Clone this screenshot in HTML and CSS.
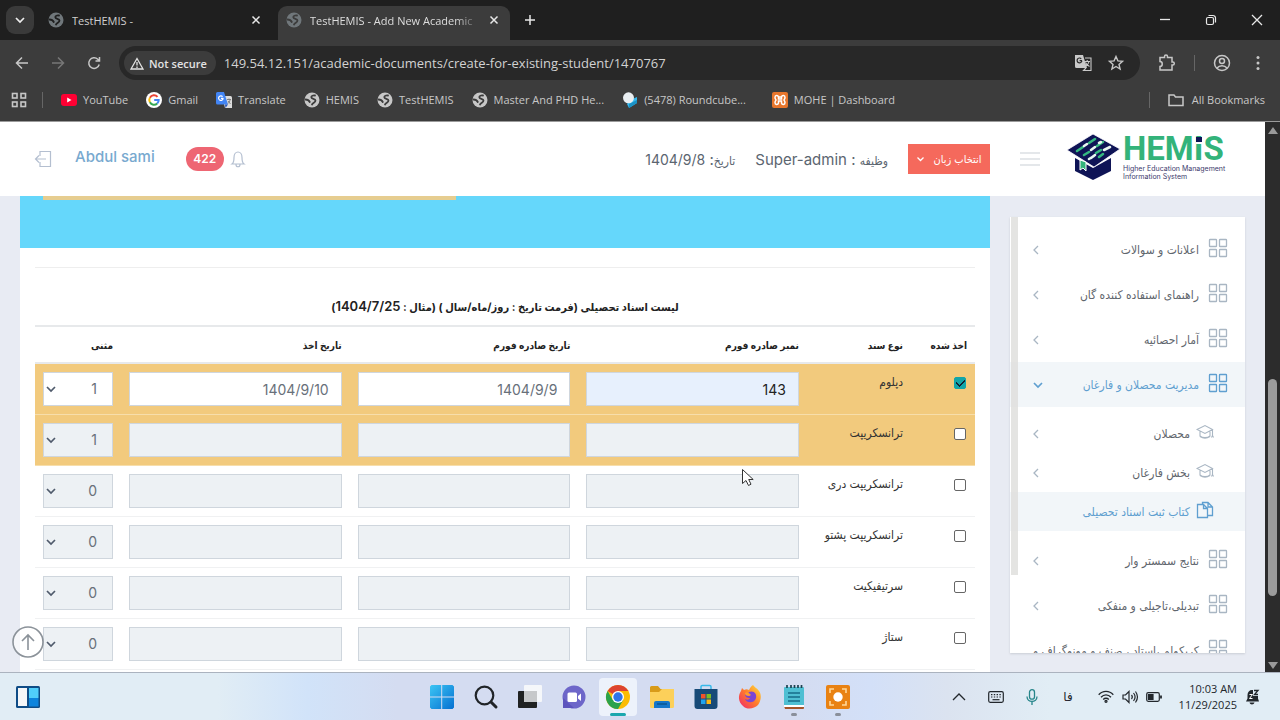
FILE: index.html
```html
<!DOCTYPE html>
<html lang="fa">
<head>
<meta charset="utf-8">
<title>TestHEMIS - Add New Academic Document</title>
<link rel="stylesheet" href="styles.css">
</head>
<body>
<svg class="defs" aria-hidden="true">
  <symbol id="globe" viewBox="0 0 16 16"><circle cx="8" cy="8" r="7.500" fill="currentColor"/><path d="M11 3.500c-2-.3-3.800.3-3.700 1.800.1 2 4.200 1 4.200 3.300 0 2-2.500 2-3.500 3.900M1.500 7.500c2.300 0 3.500.8 4.300 2.500" fill="none" stroke="var(--cut)" stroke-width="1.800" stroke-linecap="round"/></symbol>
  <symbol id="close" viewBox="0 0 10 10"><path d="M1.500 1.500l7 7M8.500 1.500l-7 7" stroke="currentColor" stroke-width="1.500" fill="none"/></symbol>
  <symbol id="grid" viewBox="0 0 20 20"><g fill="none" stroke="currentColor" stroke-width="1.300"><rect x="1.500" y="1.500" width="7" height="7" rx=".6"/><rect x="11.500" y="1.500" width="7" height="7" rx=".6"/><rect x="1.500" y="11.500" width="7" height="7" rx=".6"/><rect x="11.500" y="11.500" width="7" height="7" rx=".6"/></g></symbol>
  <symbol id="cap" viewBox="0 0 18 16"><path d="M1 5.500L9 1.500l7.500 4L9 9.500zM4 7.500v4.500c2.500 2.200 7.500 2.200 10 0V7.500M4 12.500c3 2 7 2 10 0M16.500 5.500v7M15.500 13.500l1-2 1 2" fill="none" stroke="currentColor" stroke-width="1.100"/></symbol>
  <symbol id="down" viewBox="0 0 12 8"><path d="M2 2l4 4 4-4" fill="none" stroke="currentColor" stroke-width="1.700"/></symbol>
  <symbol id="left" viewBox="0 0 8 12"><path d="M6 2L2 6l4 4" fill="none" stroke="currentColor" stroke-width="1.300"/></symbol>
</svg>

<header class="browser">
  <div class="tabs">
    <button class="tab-search" aria-label="Search tabs"><svg width="12" height="8"><use href="#down"/></svg></button>
    <div class="tab"><svg class="dim" width="16" height="16"><use href="#globe"/></svg><span class="tab-title">TestHEMIS -</span><button class="plain" aria-label="Close tab"><svg width="10" height="10"><use href="#close"/></svg></button></div>
    <div class="tab active"><svg class="dim" width="16" height="16"><use href="#globe"/></svg><span class="tab-title fade">TestHEMIS - Add New Academic</span><button class="plain" aria-label="Close tab"><svg width="10" height="10"><use href="#close"/></svg></button></div>
    <button class="plain new-tab" aria-label="New tab"><svg width="12" height="12"><path d="M6 1v10M1 6h10" stroke="currentColor" stroke-width="1.500"/></svg></button>
    <div class="window-controls">
      <button class="plain" aria-label="Minimize"><svg width="12" height="12"><path d="M1 5.500h10" stroke="currentColor" stroke-width="1.300"/></svg></button>
      <button class="plain" aria-label="Restore"><svg width="12" height="12" fill="none" stroke="currentColor" stroke-width="1.200"><rect x="1.500" y="3.500" width="7" height="7" rx="1.500"/><path d="M3.500 1.500H8A2.500 2.500 0 0110.500 4v4.500"/></svg></button>
      <button class="plain" aria-label="Close"><svg width="12" height="12"><path d="M1 1l10 10M11 1L1 11" stroke="currentColor" stroke-width="1.300"/></svg></button>
    </div>
  </div>
  <div class="toolbar">
    <button class="plain nav" aria-label="Back"><svg width="14" height="14" fill="none" stroke="currentColor" stroke-width="1.500"><path d="M13 7H2M7 1.500L1.500 7 7 12.500"/></svg></button>
    <button class="plain nav faded" aria-label="Forward"><svg width="14" height="14" fill="none" stroke="currentColor" stroke-width="1.500"><path d="M1 7h11M7 1.500L12.500 7 7 12.500"/></svg></button>
    <button class="plain" aria-label="Reload"><svg width="14" height="14" fill="none" stroke="currentColor" stroke-width="1.500"><path d="M12.200 8.500A5.300 5.300 0 1110.800 3.300L12 4.500M12.500 1v4h-4"/></svg></button>
    <div class="address">
      <button class="secure"><svg width="14" height="13" fill="none" stroke="currentColor" stroke-width="1.300"><path d="M7 1.500L13 12H1zM7 5v3.500M7 9.500V11"/></svg>Not secure</button>
      <input class="url" type="text" aria-label="Address" value="149.54.12.151/academic-documents/create-for-existing-student/1470767">
      <button class="plain" aria-label="Translate page"><svg width="18" height="18"><path d="M1 1h8l4 13H2.500A1.500 1.500 0 011 12.500z" fill="#c9c9c9"/><path d="M8 6.700H5.600M7.900 6.700a2.400 2.400 0 11-.7-2" fill="none" stroke="#282828" stroke-width="1.200"/><path d="M11 4h6v12.500H9.500L12 14M10.500 7.500h5.500M13.200 6v1.500M15 7.500c-.5 2.500-2 4-3.500 5M11.500 8.500c1 2 2.200 3 4 4" fill="none" stroke="#c9c9c9" stroke-width="1.100"/></svg></button>
      <button class="plain" aria-label="Bookmark"><svg width="16" height="16" viewBox="0 0 16 16"><path d="M8 1.500l1.900 4.400 4.600.4L11 9.400l1.100 4.600L8 11.500 3.900 14 5 9.400 1.500 6.300l4.600-.4z" fill="none" stroke="currentColor" stroke-width="1.400"/></svg></button>
    </div>
    <button class="plain" aria-label="Extensions"><svg width="18" height="18"><path d="M2 3.500h4.500V2.500a1.500 1.500 0 013 0v1H14V8h.8a1.500 1.500 0 010 3H14v5H2v-3.500c3 0 3-5 0-5z" fill="none" stroke="currentColor" stroke-width="1.500"/></svg></button>
    <i class="rule"></i>
    <button class="plain" aria-label="Profile"><svg width="18" height="18" fill="none" stroke="currentColor" stroke-width="1.500"><circle cx="9" cy="9" r="7.500"/><circle cx="9" cy="7" r="2.500"/><path d="M4 14c2.500-3 7.500-3 10 0"/></svg></button>
    <button class="plain" aria-label="Menu"><svg width="18" height="18" fill="currentColor"><circle cx="9" cy="3.500" r="1.500"/><circle cx="9" cy="9" r="1.500"/><circle cx="9" cy="14.500" r="1.500"/></svg></button>
  </div>
  <nav class="bookmarks">
    <button class="plain" aria-label="Apps"><svg width="16" height="16" fill="none" stroke="currentColor" stroke-width="1.600"><rect x="1.500" y="1.500" width="4.500" height="4.500"/><rect x="10" y="1.500" width="4.500" height="4.500"/><rect x="1.500" y="10" width="4.500" height="4.500"/><rect x="10" y="10" width="4.500" height="4.500"/></svg></button>
    <i class="rule"></i>
    <a href="#"><svg width="16" height="16"><rect y="2" width="16" height="12" rx="3" fill="#f03"/><path d="M6.200 5.500v5l4.300-2.500z" fill="#fff"/></svg>YouTube</a>
    <a href="#"><svg width="16" height="16"><circle cx="8" cy="8" r="8" fill="#fff"/><g fill="none" stroke-width="2"><path d="M11.500 4.800A4.700 4.700 0 003.900 5.700" stroke="#ea4335"/><path d="M3.900 5.700a4.700 4.700 0 000 4.600" stroke="#fbbc05"/><path d="M3.900 10.300a4.700 4.700 0 007.300 1.200" stroke="#34a853"/><path d="M11.200 11.500A4.700 4.700 0 0012.700 8H8.200" stroke="#4285f4"/></g></svg>Gmail</a>
    <a href="#"><svg width="16" height="16"><path d="M6 4h8.500A1.500 1.500 0 0116 5.500V16H9z" fill="#dcdcdc"/><path d="M0 1.500A1.500 1.500 0 011.500 0H8l4 12.500H1.500A1.500 1.500 0 010 11z" fill="#4285f4"/><path d="M9 12.500h3L9.500 16z" fill="#2a56b8"/><path d="M7.400 6.300H5M7.200 6.300a2.300 2.300 0 11-.6-1.700" fill="none" stroke="#fff" stroke-width="1.200"/><path d="M11 7.500h4M13 6.500v1M14 7.500c0 2-1 3-2 4M12 9l2.500 3" stroke="#777" stroke-width=".9" fill="none"/></svg>Translate</a>
    <a href="#"><svg width="16" height="16"><use href="#globe"/></svg>HEMIS</a>
    <a href="#"><svg width="16" height="16"><use href="#globe"/></svg>TestHEMIS</a>
    <a href="#"><svg width="16" height="16"><use href="#globe"/></svg>Master And PHD He...</a>
    <a href="#" class="wide"><svg width="16" height="16"><path d="M8 8l7-3v6l-8 5-2-4z" fill="#35b8ee"/><path d="M7 12l8-4v3l-8 5z" fill="#1a91c5"/><circle cx="6.500" cy="5.800" r="5.500" fill="#e9eef1"/></svg>(5478) Roundcube...</a>
    <a href="#"><svg width="16" height="16"><rect width="16" height="16" rx="2" fill="#e8762c"/><path d="M3 5.500c0-2.500 3-2.500 3.500-.5h3C10 3 13 3 13 5.500c0 1.500-1 2-1 2.500s1 1 1 2.500c0 2.500-3 2.500-3.500.5v-2h-3v2c-.5 2-3.500 2-3.500-.5C3 9 4 8.500 4 8s-1-1-1-2.500zM6.500 5v2h3V5" fill="none" stroke="#fff" stroke-width="1.500"/></svg>MOHE | Dashboard</a>
    <i class="rule push"></i>
    <a href="#" class="all"><svg width="16" height="14"><path d="M1 12V2h5l1.500 2H15v8.500H1z" fill="none" stroke="currentColor" stroke-width="1.500"/></svg>All Bookmarks</a>
  </nav>
</header>

<div class="viewport">
  <div class="page" dir="rtl">
    <header class="site-header">
      <a href="#" class="logo" dir="ltr" aria-label="HEMIS">
        <svg class="logo-mark" width="54" height="48" viewBox="0 0 54 48"><path d="M8 25l18 10 18-10v13L26 47 8 38z" fill="#0f1456"/><path d="M0 17L26 1l27 15-26 18z" fill="#0f1456" stroke="#fff" stroke-width=".8"/><path d="M13 27v10l3-2 3 3V29z" fill="#33b37a" stroke="#fff"/><g stroke-width="2.600" stroke-linecap="round"><path d="M10 18l6-4M22 10l6-4M17 22l5-3M30 13l6-4M29 20l5-3M36 21l-4 3" stroke="#36b981"/><path d="M17 13l3-2M24 17l4-3M22 26l5-3M37 17l6-3M34 9l-2 1M28 22l-4 3" stroke="#e9f7f2"/></g></svg>
        <span class="logo-text"><b>HEM<span class="dotted">I</span>S</b><small>Higher Education Management<br>Information System</small></span>
      </a>
      <button class="plain burger" aria-label="Menu"><svg width="20" height="16"><path d="M0 2h20M0 8h20M0 14h20" stroke="#dce0e4" stroke-width="1.500"/></svg></button>
      <button class="lang"><span>انتخاب زبان</span><svg width="9" height="6"><use href="#down"/></svg></button>
      <span class="info role"><span class="fa">وظیفه</span> : Super-admin</span>
      <span class="info"><span class="fa">تاریخ</span>: <span class="date">1404/9/8</span></span>
      <button class="plain bell" aria-label="Notifications"><svg width="14" height="17" viewBox="0 0 14 17" fill="none" stroke="#b4bfd0" stroke-width="1.200"><path d="M1 13c2-1.500 2-3 2-6.500C3 3 5 1 7 1s4 2 4 5.500c0 3.500 0 5 2 6.500zM5 13.500c0 3 4 3 4 0"/></svg></button>
      <span class="count">422</span>
      <a href="#" class="user">Abdul sami</a>
      <button class="plain" aria-label="Log out"><svg width="18" height="18" fill="none" stroke="#b4bfd0" stroke-width="1.200"><path d="M6 6V1.500h10.500v15H6V12M12 9H1.500M5 5.500L1.500 9 5 12.500"/></svg></button>
    </header>
    <div class="body">
      <aside class="sidebar">
        <ul class="menu">
          <li><a href="#"><svg width="20" height="20"><use href="#grid"/></svg><span>اعلانات و سوالات</span><svg class="arrow" width="8" height="12"><use href="#left"/></svg></a></li>
          <li><a href="#"><svg width="20" height="20"><use href="#grid"/></svg><span>راهنمای استفاده کننده گان</span><svg class="arrow" width="8" height="12"><use href="#left"/></svg></a></li>
          <li><a href="#"><svg width="20" height="20"><use href="#grid"/></svg><span>آمار احصائیه</span><svg class="arrow" width="8" height="12"><use href="#left"/></svg></a></li>
          <li><a href="#" class="current"><svg width="20" height="20"><use href="#grid"/></svg><span>مدیریت محصلان و فارغان</span><svg class="arrow" width="12" height="8"><use href="#down"/></svg></a>
            <ul class="submenu">
              <li><a href="#"><svg width="18" height="16"><use href="#cap"/></svg><span>محصلان</span><svg class="arrow" width="8" height="12"><use href="#left"/></svg></a></li>
              <li><a href="#"><svg width="18" height="16"><use href="#cap"/></svg><span>بخش فارغان</span><svg class="arrow" width="8" height="12"><use href="#left"/></svg></a></li>
              <li><a href="#" class="current"><svg width="18" height="18" fill="none" stroke="currentColor" stroke-width="1.300"><path d="M1.500 3.500h6l4 4v9h-10zM7.500 3.500v4h4M6.500 3.500v-2h5.500l4.500 4.500v8.500h-5M12 1.500V6h4.500"/></svg><span>کتاب ثبت اسناد تحصیلی</span></a></li>
            </ul>
          </li>
          <li><a href="#"><svg width="20" height="20"><use href="#grid"/></svg><span>نتایج سمستر وار</span><svg class="arrow" width="8" height="12"><use href="#left"/></svg></a></li>
          <li><a href="#"><svg width="20" height="20"><use href="#grid"/></svg><span>تبدیلی،تاجیلی و منفکی</span><svg class="arrow" width="8" height="12"><use href="#left"/></svg></a></li>
          <li><a href="#"><svg width="20" height="20"><use href="#grid"/></svg><span>کریکولم ،استاد ، صنف و مونوگراف و</span></a></li>
        </ul>
        <i class="menu-scroll"></i>
      </aside>
      <main class="card">
        <div class="band"><i></i></div>
        <div class="content">
          <h1>لیست اسناد تحصیلی (فرمت تاریخ : روز/ماه/سال ) (مثال : <span class="num">1404/7/25</span>)</h1>
          <table>
            <colgroup><col class="c-check"><col class="c-type"><col><col><col><col class="c-copy"></colgroup>
            <thead><tr><th>اخذ شده</th><th>نوع سند</th><th>نمبر صادره فورم</th><th>تاریخ صادره فورم</th><th>تاریخ اخذ</th><th>مثنی</th></tr></thead>
            <tbody>
              <tr class="marked"><td><input type="checkbox" id="d1" checked></td><td><label for="d1">دپلوم</label></td><td><input class="field filled" type="text" aria-label="نمبر صادره فورم" value="143"></td><td><input class="field" type="text" aria-label="تاریخ صادره فورم" value="1404/9/9"></td><td><input class="field" type="text" aria-label="تاریخ اخذ" value="1404/9/10"></td><td><div class="pick"><select aria-label="مثنی"><option>1</option></select><svg width="12" height="8"><use href="#down"/></svg></div></td></tr>
              <tr class="marked"><td><input type="checkbox" id="d2"></td><td><label for="d2">ترانسکریپت</label></td><td><input class="field" type="text" aria-label="نمبر صادره فورم" disabled></td><td><input class="field" type="text" aria-label="تاریخ صادره فورم" disabled></td><td><input class="field" type="text" aria-label="تاریخ اخذ" disabled></td><td><div class="pick"><select aria-label="مثنی" disabled><option>1</option></select><svg width="12" height="8"><use href="#down"/></svg></div></td></tr>
              <tr><td><input type="checkbox" id="d3"></td><td><label for="d3">ترانسکریپت دری</label></td><td><input class="field" type="text" aria-label="نمبر صادره فورم" disabled></td><td><input class="field" type="text" aria-label="تاریخ صادره فورم" disabled></td><td><input class="field" type="text" aria-label="تاریخ اخذ" disabled></td><td><div class="pick"><select aria-label="مثنی" disabled><option>0</option></select><svg width="12" height="8"><use href="#down"/></svg></div></td></tr>
              <tr><td><input type="checkbox" id="d4"></td><td><label for="d4">ترانسکریپت پشتو</label></td><td><input class="field" type="text" aria-label="نمبر صادره فورم" disabled></td><td><input class="field" type="text" aria-label="تاریخ صادره فورم" disabled></td><td><input class="field" type="text" aria-label="تاریخ اخذ" disabled></td><td><div class="pick"><select aria-label="مثنی" disabled><option>0</option></select><svg width="12" height="8"><use href="#down"/></svg></div></td></tr>
              <tr><td><input type="checkbox" id="d5"></td><td><label for="d5">سرتیفیکیت</label></td><td><input class="field" type="text" aria-label="نمبر صادره فورم" disabled></td><td><input class="field" type="text" aria-label="تاریخ صادره فورم" disabled></td><td><input class="field" type="text" aria-label="تاریخ اخذ" disabled></td><td><div class="pick"><select aria-label="مثنی" disabled><option>0</option></select><svg width="12" height="8"><use href="#down"/></svg></div></td></tr>
              <tr><td><input type="checkbox" id="d6"></td><td><label for="d6">ستاژ</label></td><td><input class="field" type="text" aria-label="نمبر صادره فورم" disabled></td><td><input class="field" type="text" aria-label="تاریخ صادره فورم" disabled></td><td><input class="field" type="text" aria-label="تاریخ اخذ" disabled></td><td><div class="pick"><select aria-label="مثنی" disabled><option>0</option></select><svg width="12" height="8"><use href="#down"/></svg></div></td></tr>
            </tbody>
          </table>
        </div>
      </main>
    </div>
    <button class="plain to-top" aria-label="Back to top"><svg width="32" height="32" fill="none" stroke="#8b9299" stroke-width="1.600"><circle cx="16" cy="16" r="15" fill="#fff" fill-opacity=".6"/><path d="M16 24V9.500M10 15l6-6 6 6"/></svg></button>
  </div>
  <div class="scrollbar"><svg width="10" height="7"><path d="M5 0l5 7H0z" fill="#9a9a9a"/></svg><i></i><svg width="10" height="7"><path d="M5 7l5-7H0z" fill="#9a9a9a"/></svg></div>
  <svg class="cursor" width="14" height="20"><path d="M1.500 1.500v14l3.500-3 2.500 5 2.500-1.300-2.300-4.700h4.500z" fill="#fff" stroke="#333" stroke-width="1"/></svg>
</div>

<footer class="taskbar">
  <div class="widgets"><button class="plain" aria-label="Widgets"><svg width="24" height="22"><rect width="24" height="22" rx="1.500" fill="#0e4c86"/><rect x="2" y="2" width="9" height="18" fill="#f4f6f8"/><rect x="13" y="2" width="9.500" height="10" fill="#50cffb"/><rect x="13" y="12" width="9.500" height="8.500" fill="#0c84dd"/></svg></button></div>
  <div class="apps">
    <button class="app" aria-label="Start"><svg width="24" height="24"><defs><linearGradient id="win" x2="1" y2="1"><stop stop-color="#3cc5f4"/><stop offset="1" stop-color="#0570d1"/></linearGradient></defs><path d="M1.500 0h9.700v11.400H0V1.500zM12.200 0h10.300L24 1.500v9.900H12.200zM0 12.400h11.200V24H1.500L0 22.500zM12.200 12.400H24v10.100L22.500 24H12.200z" fill="url(#win)"/></svg></button>
    <button class="app" aria-label="Search"><svg width="24" height="24" fill="none" stroke="#202428"><circle cx="10.500" cy="10.500" r="8.800" stroke-width="2.200"/><path d="M17 17l5 5" stroke-width="3" stroke-linecap="round"/></svg></button>
    <button class="app" aria-label="Task view"><svg width="24" height="24"><rect x="0" y="6" width="19" height="17" rx="1" fill="#202222"/><rect x="6" y="0" width="18" height="17" rx="1" fill="#fafbfb" opacity=".85"/><path d="M6 6h13v11H6z" fill="#c6c8ca"/></svg></button>
    <button class="app" aria-label="Chat"><svg width="24" height="24"><path d="M12 .5A11.500 11.500 0 11.500 12c0-6 5-11.500 11.500-11.500z" fill="#6d66c9"/><path d="M1 13v10h11z" fill="#5c54bd"/><rect x="5.500" y="7.500" width="9.500" height="9.500" rx="1.500" fill="#fff"/><path d="M16 11l3-2.500v7.500L16 13.500z" fill="#fff"/></svg></button>
    <button class="app open" aria-label="Chrome"><svg width="24" height="24" viewBox="0 0 24 24"><circle cx="12" cy="12" r="12" fill="#fbbc05"/><path d="M12 12L1.600 6A12 12 0 0122.400 6H12z" fill="#dd4330"/><path d="M1.600 6A12 12 0 0012 24l5.200-9L12 12 6.800 15z" fill="#2ba24c"/><circle cx="12" cy="12" r="6" fill="#fff"/><circle cx="12" cy="12" r="4.700" fill="#2f74e8"/></svg></button>
    <button class="app" aria-label="Files"><svg width="24" height="24"><path d="M0 2.500A1.500 1.500 0 011.500 1H8l2.500 3H24v6H0z" fill="#d89b19"/><path d="M0 7h9l3-3h12v17.500A1.500 1.500 0 0122.500 23h-21A1.500 1.500 0 010 21.500z" fill="#fcd05a"/><path d="M4 23v-5a2 2 0 012-2h12a2 2 0 012 2v5z" fill="#1676c9"/><path d="M7 19h10" stroke="#0b568f" stroke-width="1.500"/></svg></button>
    <button class="app" aria-label="Store"><svg width="24" height="24"><path d="M7 4V1.800A1.300 1.300 0 018.300.5h7.400A1.300 1.300 0 0117 1.800V4" fill="none" stroke="#38b9ea" stroke-width="1.500"/><path d="M.5 4h23v17a3 3 0 01-3 3h-17a3 3 0 01-3-3z" fill="#174a78"/><path d="M7 9h4.500v4.500H7z" fill="#f1522b"/><path d="M12.500 9H17v4.500h-4.500z" fill="#7fbb22"/><path d="M7 14.500h4.500V19H7z" fill="#20a4ef"/><path d="M12.500 14.500H17V19h-4.500z" fill="#feb813"/></svg></button>
    <button class="app" aria-label="Firefox"><svg width="24" height="24"><defs><linearGradient id="fox" x1="1" x2="0" y2="1"><stop stop-color="#ffe23c"/><stop offset=".5" stop-color="#ff7a2c"/><stop offset="1" stop-color="#ee2370"/></linearGradient></defs><path d="M15 0c1 2 4 3 6 6 3 4 2 10-1 14-4 4-11 5-15 1C0 17 0 10 3 6l1-3 2 2c2-1 3-1 5 0 1-2 2-4 4-5z" fill="url(#fox)"/><path d="M11 7c5-2 8 2 7 6-1 5-9 6-11 1 2 1 4 1 5-1-3 0-5-1-5-4 1 1 3 0 4-2z" fill="#7a45d4"/><path d="M7 8c2-1 4 0 5 1 1 0 1 2-1 2-3 0-4-1-4-3z" fill="#ff9b2d"/></svg></button>
    <button class="app run" aria-label="Notepad"><svg width="20" height="24"><rect y="2" width="20" height="20" rx="1" fill="#4fbfd3"/><path d="M0 21h20v2a1 1 0 01-1 1H1z" fill="#a4552a"/><path d="M0 20h20v2H0z" fill="#fff"/><path d="M3 0v3M7 0v3M10.500 0v3M14 0v3M17.500 0v3" stroke="#1d4250" stroke-width="1.700"/><path d="M4 8h12M4 12h12M4 16h12" stroke="#176d8a" stroke-width="1.500"/></svg></button>
    <button class="app run" aria-label="Recorder"><svg width="24" height="24"><rect width="24" height="24" rx="2" fill="#e98212"/><circle cx="12" cy="12" r="4.700" fill="#fff"/><path d="M4 8V4h4M16 4h4v4M20 16v4h-4M8 20H4v-4" fill="none" stroke="#ffd898" stroke-width="1.600"/></svg></button>
  </div>
  <div class="tray">
    <button class="plain" aria-label="Hidden icons"><svg width="14" height="10" fill="none" stroke="currentColor" stroke-width="1.300"><path d="M1 8l6-6 6 6"/></svg></button>
    <button class="plain" aria-label="Keyboard"><svg width="16" height="14" fill="none" stroke="currentColor" stroke-width="1.200"><rect x=".7" y="1.700" width="14.600" height="10.600" rx="1.500"/><path d="M3 4.700h10M3 7h10" stroke-dasharray="1.400 1.400"/><path d="M4.500 9.700h7"/></svg></button>
    <button class="plain mic" aria-label="Microphone"><svg width="12" height="16" fill="none" stroke="currentColor" stroke-width="1.300"><rect x="3.500" y=".7" width="5" height="9.500" rx="2.500"/><path d="M1 7.500c0 6.500 10 6.500 10 0M6 12.500V16"/></svg></button>
    <button class="plain fa-lang" lang="fa">فا</button>
    <div class="status">
      <svg width="16" height="13" fill="none" stroke="currentColor" stroke-width="1.300"><path d="M.7 4.700c4-4.500 10.600-4.500 14.600 0M3 7.200c3-3.200 7-3.200 10 0M5.200 9.500c1.700-1.700 3.900-1.700 5.600 0"/><circle cx="8" cy="11.300" r="1"/></svg>
      <svg width="16" height="14" fill="none" stroke="currentColor" stroke-width="1.200"><path d="M1 5h2.500L7 1.500v11L3.500 9H1zM9.500 5c1 1.200 1 2.800 0 4M11.500 3c2 2.500 2 5.500 0 8M13.500 1.500c2.500 3.500 2.500 7.500 0 11"/></svg>
      <svg width="16" height="12" fill="none" stroke="currentColor" stroke-width="1.200"><rect x=".7" y="1.700" width="12.600" height="8.600" rx="1.500"/><path d="M2.500 3.500H7v5H2.500z" fill="currentColor"/><path d="M15 4.500v3" stroke-width="1.800"/></svg>
    </div>
    <time class="clock">10:03 AM<br>11/29/2025</time>
    <svg class="alert" width="14" height="16"><path d="M1 12.500l1.500-3V6C2.500 3 4.500 1 7 1h1v6h5v2.500l1 3zM4.500 13.500h5c-.5 2.500-4.500 2.500-5 0z" fill="currentColor"/><path d="M9 1.500h4L9.500 5.500H13" fill="none" stroke="currentColor" stroke-width="1.300"/><path d="M4.500 5.500h3l-3 4h3" fill="none" stroke="#fff" stroke-width="1"/></svg>
  </div>
</footer>
</body>
</html>
```
FILE: styles.css
```css
* { box-sizing: border-box; }
body { margin: 0; height: 100vh; display: flex; flex-direction: column; overflow: hidden; font-family: "Open Sans", "Noto Sans", sans-serif; }
a { color: inherit; text-decoration: none; }
button, input, select { font: inherit; color: inherit; margin: 0; }
svg { display: block; flex: none; overflow: visible; }
ul { list-style: none; margin: 0; padding: 0; }
.defs { position: absolute; width: 0; height: 0; }
.plain { display: flex; align-items: center; justify-content: center; flex: none; background: none; border: 0; padding: 0; }

/* browser frame */
.browser { flex: none; background: #3c3c3c; color: #c7c7c7; font-size: 11px; border-bottom: 1px solid #9b9b9b; }
.tabs { height: 40px; display: flex; align-items: center; background: #1f1f1f; padding-left: 6px; }
.tab-search { width: 28px; height: 28px; border: 0; padding: 0; border-radius: 9px; background: #3a3a3a; color: #eee; display: flex; align-items: center; justify-content: center; }
.tab { --cut: #1f1f1f; display: flex; align-items: center; gap: 8px; width: 230px; padding: 0 17px 0 0; margin-left: 14px; color: #cfcfcf; }
.tab.active { --cut: #3c3c3c; align-self: flex-end; height: 34px; width: 232px; margin-left: 0; padding: 0 11px 6px 8px; background: #3c3c3c; border-radius: 9px 9px 0 0; color: #ddd; }
.tab .plain, .new-tab, .window-controls { color: #e8e8e8; }
.tab-title { flex: 1; overflow: hidden; white-space: nowrap; }
.fade { -webkit-mask-image: linear-gradient(90deg, #000 85%, transparent); mask-image: linear-gradient(90deg, #000 85%, transparent); }
.dim { color: #70777b; }
.new-tab { margin-left: 14px; }
.window-controls { margin-left: auto; display: flex; }
.window-controls .plain { width: 46px; }
.toolbar { height: 46px; display: flex; align-items: center; padding: 0 13px 0 15px; gap: 18px; }
.toolbar .nav { margin-right: 4px; }
.toolbar > .faded { color: #777; }
.address { flex: 1; display: flex; align-items: center; gap: 16px; height: 34px; padding: 0 16px 0 5px; border-radius: 17px; background: #282828; }
.secure { display: flex; align-items: center; gap: 5px; height: 24px; padding: 0 9px 0 6px; margin-right: -8px; border: 0; border-radius: 12px; background: #3c3c3c; color: #e3e3e3; font-weight: 600; white-space: nowrap; }
.url { flex: 1; min-width: 0; border: 0; padding: 0; background: none; color: #d2d2d2; font-size: 13px; }
.rule { width: 1px; height: 16px; background: #666; flex: none; }
.bookmarks { --cut: #3c3c3c; height: 35px; display: flex; align-items: center; gap: 18px; padding: 0 15px 8px 11px; white-space: nowrap; }
.bookmarks a { display: flex; align-items: center; gap: 6px; }
.bookmarks .plain { margin-right: -3px; }
.bookmarks .wide { margin-right: 8px; }
.push { margin-left: auto; }
.bookmarks .all { gap: 8px; }

/* page */
.viewport { flex: 1; min-height: 0; display: flex; position: relative; }
.page { flex: 1; min-width: 0; display: flex; flex-direction: column; position: relative; overflow: hidden; background: #e8ebf3; font-family: Inter, "DejaVu Sans Condensed", "DejaVu Sans", sans-serif; font-size: 12px; color: #5f666d; }
.site-header { flex: none; height: 74px; display: flex; align-items: center; padding: 0 42px 0 34px; background: #fff; }
.logo { display: flex; width: 156px; gap: 2px; align-items: center; padding-bottom: 4px; }
.logo-text { display: flex; flex-direction: column; white-space: nowrap; color: #3c3a6c; }
.logo-text b { font: bold 33px/32px Roboto, "Open Sans", sans-serif; color: #33b37a; }
.logo-text small { font-size: 7px; line-height: 8px; }
.dotted { position: relative; }
.dotted::after { content: ""; position: absolute; left: 2px; right: 1px; top: 8px; height: 5px; background: #0f1456; border-bottom: 2px solid #fff; box-sizing: content-box; }
.burger { margin-right: 27px; }
.lang { margin-right: 30px; height: 30px; width: 82px; border: 0; padding: 0; display: flex; align-items: center; justify-content: center; gap: 8px; background: #f5695c; color: #fff; font-size: 11px; white-space: nowrap; }
.info { font-size: 15px; margin-right: 20px; white-space: nowrap; color: #5b6570; }
.info .fa { font-size: 12px; }
.info .date { font-size: 14px; }
.bell { margin-right: auto; }
.count { margin-right: 7px; width: 38px; height: 24px; border-radius: 12px; background: #ee6673; color: #fff; font-size: 12px; line-height: 24px; font-weight: 600; text-align: center; }
.user { margin-right: 31px; margin-left: 23px; padding-bottom: 5px; font-size: 15px; font-weight: 500; color: #78a9cf; white-space: nowrap; }
.body { flex: 1; min-height: 0; display: flex; gap: 20px; padding: 0 20px; }
.sidebar { width: 235px; flex: none; margin: 21px 0 19px; background: #fff; overflow: hidden; position: relative; box-shadow: 0 1px 2px #c9cdd5; }
.menu { padding-top: 10px; }
.menu a { display: flex; align-items: center; height: 45px; padding: 0 17px 0 22px; gap: 9px; white-space: nowrap; }
.menu a > svg { color: #a9b6c3; margin-bottom: 3px; }
.menu a > .arrow { margin-right: auto; margin-bottom: 0; }
.submenu { padding: 7px 0; }
.menu .submenu a { height: 39px; padding-right: 31px; gap: 6px; }
.menu .current, .menu .current > svg { color: #5f9fd0; }
.menu .current { background: #f2f6f9; }
.menu-scroll { position: absolute; left: 1px; top: 0; width: 7px; height: 82%; background: #dddddb; opacity: .8; }
.card { flex: 1; min-width: 0; background: #fff; overflow: hidden; }
.band { height: 52px; background: #65d7fb; padding: 0 23px; display: flex; justify-content: flex-end; }
.band i { width: 413px; height: 4px; background: #e6cd90; }
.content { margin: 19px 15px 0; border-top: 1px solid #eee; }
h1 { margin: 0; padding: 28px 0 8px; font-size: 11px; line-height: 20px; text-align: center; color: #222; white-space: nowrap; }
.num { font-size: 13px; font-weight: 600; }
table { width: 100%; table-layout: fixed; border-collapse: separate; border-spacing: 0; border-top: 2px solid #e7e9eb; }
.c-check { width: 64px; }
.c-type { width: 104px; }
.c-copy { width: 86px; }
th { height: 37px; padding: 0 8px; border-bottom: 2px solid #e7e9eb; text-align: right; font-size: 10px; color: #222; white-space: nowrap; }
td { padding: 8px; border-bottom: 1px solid #f0f1f2; vertical-align: top; color: #333; line-height: 20px; white-space: nowrap; }
.marked td { background: #f2ca7d; border-color: #f7deab; }
td input[type="checkbox"] { appearance: none; display: block; width: 12px; height: 12px; margin: 5px 1px; border: 1px solid #666; border-radius: 2px; background: #fff; }
td input[type="checkbox"]:checked { border-color: #12a5a9; background: linear-gradient(-45deg, transparent 44%, #123 44% 56%, transparent 56%) 4px 1px / 7px 8px no-repeat, linear-gradient(45deg, transparent 40%, #123 40% 60%, transparent 60%) 1px 4px / 4px 5px no-repeat, #12a5a9; }
.field, .pick select { display: block; width: 100%; height: 34px; border: 1px solid #cfd6dd; border-radius: 0; background: #fff; color: #68707a; font-size: 14px; padding: 0 12px; }
.field:disabled, .pick select:disabled { background: #edf1f4; color: #68707a; opacity: 1; }
.field.filled { background: #e7f0fd; color: #222; }
.pick { position: relative; }
.pick select { appearance: none; padding: 0 15px; }
.pick svg { position: absolute; left: 2px; top: 13px; color: #4f5a6b; }
.to-top { position: absolute; left: 12px; bottom: 14px; }
.scrollbar { width: 15px; flex: none; display: flex; flex-direction: column; align-items: center; padding: 5px 0 3px; background: #2c2c2c; }
.scrollbar i { width: 9px; height: 40%; margin: auto 0 66px; border-radius: 5px; background: #9c9c9c; }
.cursor { position: absolute; left: 741px; top: 346px; }

/* taskbar */
.taskbar { flex: none; height: 48px; display: grid; grid-template-columns: 1fr auto 1fr; align-items: center; border-top: 1px solid #abb3bf; background: linear-gradient(90deg, #e1edf5 0 17%, #d1e3f9 24%, #d4dcf1 31% 62%, #d3e0f8 68%, #dbe3f0 74%, #e1edf5 82%); color: #22272c; }
.widgets { padding-left: 16px; display: flex; }
.apps { display: flex; gap: 6px; }
.app { position: relative; width: 38px; height: 38px; border: 0; border-radius: 4px; padding: 0; background: none; display: flex; align-items: center; justify-content: center; }
.app.open { background: #edf2fb; }
.app.open::after, .app.run::after { content: ""; position: absolute; bottom: 0; width: 6px; height: 3px; border-radius: 2px; background: #8a8f9a; }
.app.open::after { width: 16px; background: #1ba7ae; }
.tray { display: flex; align-items: center; justify-content: flex-end; gap: 22px; padding-right: 21px; }
.mic { color: #26858a; }
.fa-lang { width: 16px; font-size: 12px; font-family: "DejaVu Sans", sans-serif; }
.status { display: flex; align-items: center; gap: 8px; }
.clock { font-size: 11px; line-height: 16px; text-align: right; white-space: nowrap; width: 60px; margin-left: -7px; }
.alert { margin-left: -14px; }
```
